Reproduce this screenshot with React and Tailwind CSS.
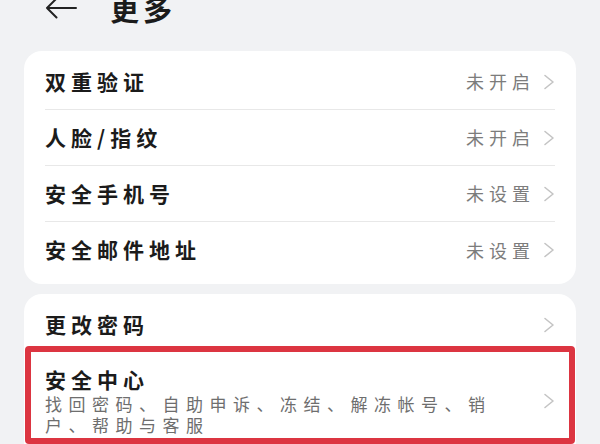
import React from "react";

const Chevron = () => (
  <svg width="12" height="16" viewBox="0 0 12 16" fill="none">
    <path d="M2 1.5 L10 8 L2 14.5" stroke="#c4c4c4" strokeWidth="1.6" strokeLinecap="round" strokeLinejoin="round" />
  </svg>
);

const rows = [
  {label: "双重验证", value: "未开启"},
  {label: "人脸/指纹", value: "未开启"},
  {label: "安全手机号", value: "未设置"},
  {label: "安全邮件地址", value: "未设置"},
];

function Row({label, value, last}) {
  return (
    <div className={"mx-[21px] h-[56px] flex items-center justify-between " + (last ? "" : "border-b border-[#e8e8e8]")}>
      <span className="text-[21px] font-semibold tracking-[5px] text-[#1b1b1b]">{label}</span>
      <div className="flex items-center gap-[8px]">
        <span className="text-[18px] tracking-[5px] text-[#7c7c7c]">{value}</span>
        <Chevron />
      </div>
    </div>
  );
}

export default function App() {
  return (
    <div
      className="w-[600px] h-[444px] overflow-hidden bg-[#f1f2f4]"
      style={{fontFamily: '"Noto Sans CJK SC", "Noto Sans", sans-serif'}}
    >
      <div className="h-[30px] -mt-[7px] flex items-center pl-[45px]">
        <svg width="32" height="22" viewBox="0 0 32 22" fill="none">
          <path d="M31 11 H2 M11.5 1.5 L2 11 L11.5 20.5" stroke="#222" strokeWidth="2" strokeLinecap="round" strokeLinejoin="round" />
        </svg>
        <span className="ml-[33px] text-[29px] font-semibold tracking-[4px] text-[#1b1b1b] leading-none">更多</span>
      </div>

      <div className="mt-[28px] mx-[24px] bg-white rounded-[18px] pt-[3px] pb-[6px]">
        {rows.map((r, i) => (
          <Row key={r.label} {...r} last={i === rows.length - 1} />
        ))}
      </div>

      <div className="mt-[10px] mx-[24px] bg-white rounded-t-[18px] pt-[4px] h-[200px]">
        <div className="mx-[21px] h-[54px] flex items-center justify-between">
          <span className="text-[21px] font-semibold tracking-[5px] text-[#1b1b1b]">更改密码</span>
          <Chevron />
        </div>
        <div className="relative">
          <div className="absolute -top-[6px] left-[1px] right-[1px] h-[98px] border-[6px] border-[#dc3541] rounded-[4px]" />
          <div className="mx-[21px] pt-[14px] flex items-center justify-between">
            <div>
              <div className="text-[21px] font-semibold tracking-[5px] text-[#1b1b1b] leading-[27px]">安全中心</div>
              <div className="w-[462px] text-[17px] tracking-[6.5px] text-[#6e6e6e] leading-[21px]">
                找回密码、自助申诉、冻结、解冻帐号、销户、帮助与客服
              </div>
            </div>
            <Chevron />
          </div>
        </div>
      </div>
    </div>
  );
}
